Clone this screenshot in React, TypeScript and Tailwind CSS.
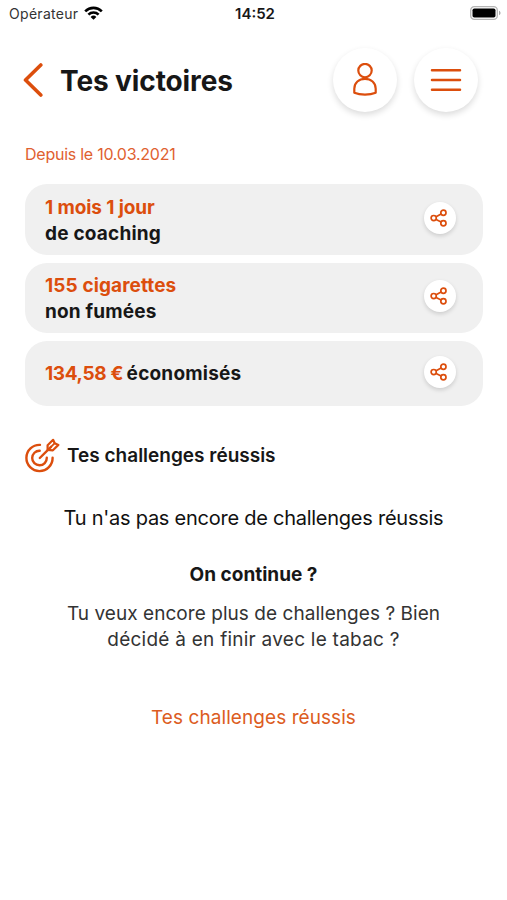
import { ReactNode } from 'react'

const victories = [
  { value: '1 mois 1 jour', label: 'de coaching', inline: false, height: 'h-[71px]', valueSpacing: 'tracking-[-0.1px]', labelSpacing: 'tracking-[0.2px]' },
  { value: '155 cigarettes', label: 'non fumées', inline: false, height: 'h-[70px]', valueSpacing: 'tracking-[0.1px]', labelSpacing: 'tracking-[0.18px]' },
  { value: '134,58 €', label: 'économisés', inline: true, height: 'h-[65px]', valueSpacing: 'tracking-[-0.35px]', labelSpacing: 'tracking-[0.2px]' },
]

export default function App() {
  return (
    <div className="w-[507px] h-[900px] overflow-hidden bg-white text-[#171717] font-[Inter,sans-serif]">
      <StatusBar />

      <header className="mt-5 flex h-16 items-center pl-[23px] pr-[29px]">
        <BackIcon />
        <h1 className="ml-[17px] mt-[2px] whitespace-nowrap text-[28px] font-bold leading-8 tracking-[-0.1px]">Tes victoires</h1>
        <div className="ml-auto flex gap-[17px]">
          <RoundButton label="Profil"><UserIcon /></RoundButton>
          <RoundButton label="Menu"><MenuIcon /></RoundButton>
        </div>
      </header>

      <main className="px-[25px]">
        <p className="mt-[30px] h-6 whitespace-nowrap text-[16px] leading-6 tracking-[-0.25px] text-[#df6130]">Depuis le 10.03.2021</p>

        <div className="mt-[18px] flex w-[458px] flex-col gap-2">
          {victories.map((v) => (
            <div key={v.value} className={`flex items-center justify-between rounded-[22px] bg-[#f0f0f0] pl-5 pr-[27px] ${v.height}`}>
              <p className={`whitespace-nowrap text-[19px] font-bold leading-[26px] ${v.inline ? '' : 'mt-[2px]'}`}>
                <span className={`text-[#dc4e0d] ${v.valueSpacing}`}>{v.value}</span>
                {v.inline ? <span className="tracking-[-1px]"> </span> : <br />}
                <span className={v.labelSpacing}>{v.label}</span>
              </p>
              <button aria-label="Partager" className="mb-1 flex size-8 items-center justify-center rounded-full bg-white shadow-[0_2px_4px_rgba(0,0,0,0.15)]">
                <ShareIcon />
              </button>
            </div>
          ))}
        </div>

        <div className="mt-8 flex h-9 items-center">
          <TargetIcon />
          <h2 className="ml-[7px] whitespace-nowrap text-[19px] font-semibold">Tes challenges réussis</h2>
        </div>
      </main>

      <section className="flex flex-col items-center whitespace-nowrap text-center">
        <p className="mt-[30px] text-[20px] leading-7 tracking-[-0.25px] text-[#111]">Tu n'as pas encore de challenges réussis</p>
        <h3 className="mt-[30px] text-[19px] font-bold leading-[26px]">On continue ?</h3>
        <p className="mt-[13px] text-[19px] leading-[26px] text-[#333]">
          <span className="tracking-[0.05px]">Tu veux encore plus de challenges ? Bien</span>
          <br />
          <span className="tracking-[0.25px]">décidé à en finir avec le tabac ?</span>
        </p>
        <a className="mt-[52px] text-[19px] leading-[26px] tracking-[0.07px] text-[#dc5c22]">Tes challenges réussis</a>
      </section>
    </div>
  )
}

const StatusBar = () => (
  <div className="grid h-7 grid-cols-3 items-center pl-[9px] pr-[6px] text-[14px]">
    <div className="mb-[2px] flex items-center gap-[6px]">
      <span className="tracking-[0.3px] text-[#333]">Opérateur</span>
      <svg width="19" height="14" viewBox="0 0 19 14" fill="none" stroke="#000" strokeWidth="2.6">
        <path d="M1.2 5.3a11.8 11.8 0 0 1 16.6 0" />
        <path d="M4.4 8.600a7.300 7.300 0 0 1 10.200 0" />
        <path d="M9.5 13.8 6.6 10.9a4.1 4.1 0 0 1 5.8 0z" fill="#000" stroke="none" />
      </svg>
    </div>
    <span className="text-center text-[15px] font-semibold">14:52</span>
    <svg className="mb-[2px] ml-auto" width="31" height="14" viewBox="0 0 31 14">
      <rect x="0.7" y="0.7" width="26.6" height="12.6" rx="3.6" fill="#fff" stroke="#b5b5b5" strokeWidth="1.3" />
      <rect x="2.5" y="2.5" width="23" height="9" rx="1.8" fill="#000" />
      <path d="M29 4.8c2 .7 2 3.7 0 4.4z" fill="#aaa" />
    </svg>
  </div>
)

const RoundButton = ({ label, children }: { label: string, children: ReactNode }) => (
  <button aria-label={label} className="flex size-16 items-center justify-center rounded-full bg-white shadow-[0_3px_6px_rgba(0,0,0,0.14)]">
    {children}
  </button>
)

const BackIcon = () => (
  <svg width="20" height="34" viewBox="0 0 20 34" fill="none" stroke="#dc4e0d" strokeWidth="3.6" strokeLinecap="round" strokeLinejoin="round">
    <path d="M17.8 2 2.5 17l15.3 15" />
  </svg>
)

const UserIcon = () => (
  <svg width="24" height="34" viewBox="0 0 24 34" fill="none" stroke="#dc4e0d" strokeWidth="2.2" strokeLinejoin="round">
    <circle cx="12" cy="7.6" r="6.7" />
    <path d="M1.3 29.8v-4C1.3 19.6 6 15.8 12 15.8s10.7 3.8 10.7 10v4c-6 2.5-15.4 2.5-21.4 0z" />
  </svg>
)

const MenuIcon = () => (
  <svg width="32" height="24" viewBox="0 0 32 24" stroke="#dc4e0d" strokeWidth="2.5" strokeLinecap="round">
    <path d="M2 2.3h28M2 12h28M2 21.7h28" />
  </svg>
)

const ShareIcon = () => (
  <svg className="mr-[2px]" width="18" height="18" viewBox="0 0 18 18" fill="none" stroke="#dc4e0d" strokeWidth="1.7">
    <circle cx="3.7" cy="9.1" r="2.6" />
    <circle cx="13.4" cy="3.8" r="2.6" />
    <circle cx="13.4" cy="14.3" r="2.6" />
    <path d="m6.1 7.8 5-2.7M6.1 10.4l5 2.7" />
  </svg>
)

const TargetIcon = () => (
  <svg width="35" height="36" viewBox="0 0 35 36" fill="none" stroke="#dc4e0d" strokeWidth="2.4" strokeLinecap="round" strokeLinejoin="round">
    <path d="M15 6.9a13.100 13.100 0 1 0 12.600 12.800" />
    <path d="M14.700 12.700a7.300 7.300 0 1 0 7.100 7.100" />
    <path d="M14.800 20 26 8.800" />
    <path d="M22.600 11.800V7.200l5.500-5.400 1.600 3.500 3.700 1.600-5.500 5.400z" strokeWidth="2.200" />
    <path d="m26 8.800 3.500-3.500" strokeWidth="1.800" />
  </svg>
)
